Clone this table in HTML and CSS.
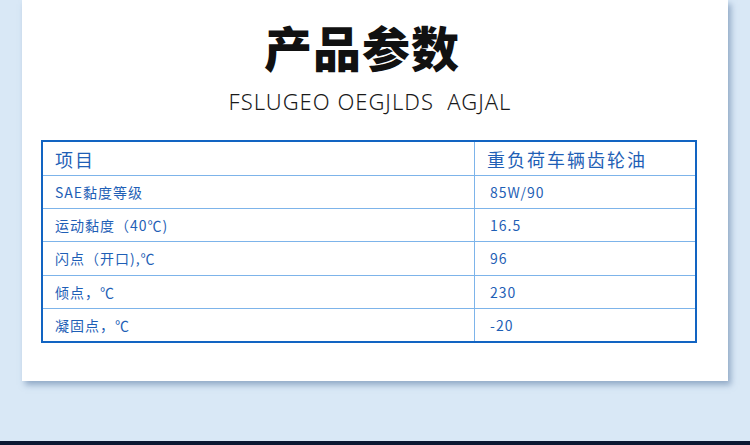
FILE: index.html
```html
<!DOCTYPE html>
<html lang="zh">
<head>
<meta charset="utf-8">
<title>产品参数</title>
<link rel="stylesheet" href="styles.css">
</head>
<body>
<div class="page">
  <div class="card">
    <h1 class="title">产品参数</h1>
    <p class="subtitle">FSLUGEO OEGJLDS&nbsp; AGJAL</p>
    <table class="spec">
      <colgroup><col class="c1"><col class="c2"></colgroup>
      <tr class="head"><td>项目</td><td>重负荷车辆齿轮油</td></tr>
      <tr><td>SAE黏度等级</td><td>85W/90</td></tr>
      <tr><td>运动黏度（40℃)</td><td>16.5</td></tr>
      <tr><td>闪点（开口),℃</td><td>96</td></tr>
      <tr><td>倾点，℃</td><td>230</td></tr>
      <tr><td>凝固点，℃</td><td>-20</td></tr>
    </table>
  </div>
  <div class="strip"></div>
</div>
</body>
</html>
```
FILE: styles.css
```css
html, body {
  margin: 0;
  padding: 0;
}
body {
  width: 750px;
  height: 445px;
  overflow: hidden;
  font-family: "Noto Sans CJK SC", "Noto Sans", sans-serif;
}
.page {
  width: 750px;
  height: 445px;
  background: #d9e8f6;
  display: flex;
  flex-direction: column;
}
.card {
  margin-left: 22px;
  width: 706px;
  height: 381px;
  background: #ffffff;
  box-shadow: 3px 4px 6px rgba(90, 120, 160, 0.55);
  box-sizing: border-box;
  padding-top: 22px;
}
.title {
  margin: 0 26px 0 0;
  font-size: 48px;
  line-height: 48px;
  font-weight: 900;
  text-align: center;
  color: #111111;
  letter-spacing: 1px;
}
.subtitle {
  margin: 18px 10px 0 0;
  font-family: "Noto Sans", sans-serif;
  font-weight: 300;
  font-size: 22px;
  line-height: 26px;
  text-align: center;
  color: #1a1a1a;
  letter-spacing: 1px;
}
.spec {
  margin: 26px 0 0 19px;
  width: 656px;
  border-collapse: collapse;
  border: 2px solid #1264c2;
  color: #1f5fb6;
}
.c1 { width: 434px; }
.c2 { width: 222px; }
.spec td {
  border: 1px solid #7db4ea;
  height: 32.2px;
  padding: 0 0 0 12px;
  font-size: 14px;
  letter-spacing: 1px;
  vertical-align: middle;
}
.spec td + td { padding-left: 15px; }
.spec .head td + td { padding-left: 12px; }
.spec tr:first-child td { border-top: none; }
.spec td:first-child { border-left: none; }
.spec td:last-child { border-right: none; }
.spec tr:last-child td { border-bottom: none; }
.spec .head td {
  font-size: 18px;
  letter-spacing: 2px;
  height: 33px;
}
.strip {
  margin-top: auto;
  height: 4px;
  background: #0b1832;
}
```
